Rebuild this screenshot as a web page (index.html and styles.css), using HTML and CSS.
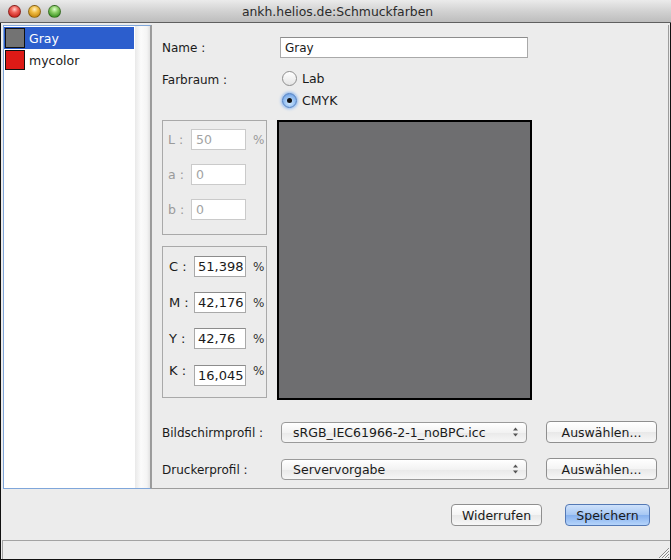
FILE: index.html
```html
<!DOCTYPE html>
<html>
<head>
<meta charset="utf-8">
<link rel="stylesheet" href="styles.css">
</head>
<body>
<div class="window">
  <div class="titlebar">
    <div class="lights">
      <span class="light red"></span>
      <span class="light yellow"></span>
      <span class="light green"></span>
    </div>
    <div class="title">ankh.helios.de:Schmuckfarben</div>
  </div>
  <div class="frame">
    <div class="main">
      <div class="list">
        <div class="items">
          <div class="item selected"><span class="swatch gray"></span><span>Gray</span></div>
          <div class="item"><span class="swatch red-sw"></span><span>mycolor</span></div>
        </div>
        <div class="scrolltrack"></div>
      </div>
      <div class="panel">
        <div class="row name-row">
          <span class="label">Name :</span>
          <div class="field name-field">Gray</div>
        </div>
        <div class="space-row">
          <span class="label space-label">Farbraum :</span>
          <div class="radios">
            <div class="radio-row"><span class="radio"></span><span>Lab</span></div>
            <div class="radio-row"><span class="radio on"></span><span>CMYK</span></div>
          </div>
        </div>
        <div class="middle">
          <div class="boxes">
            <div class="box lab-box">
              <div class="vrow"><span class="vlabel">L :</span><div class="field vfield dis">50</div><span class="pct">%</span></div>
              <div class="vrow"><span class="vlabel">a :</span><div class="field vfield dis">0</div></div>
              <div class="vrow"><span class="vlabel">b :</span><div class="field vfield dis">0</div></div>
            </div>
            <div class="box cmyk-box">
              <div class="vrow"><span class="clabel">C :</span><div class="field cfield">51,398</div><span class="pct dark">%</span></div>
              <div class="vrow"><span class="clabel">M :</span><div class="field cfield">42,176</div><span class="pct dark">%</span></div>
              <div class="vrow"><span class="clabel">Y :</span><div class="field cfield">42,76</div><span class="pct dark">%</span></div>
              <div class="vrow krow"><span class="clabel up">K :</span><div class="field cfield">16,045</div><span class="pct dark up">%</span></div>
            </div>
          </div>
          <div class="preview"></div>
        </div>
        <div class="row profile-row first">
          <span class="label plabel">Bildschirmprofil :</span>
          <div class="select"><span>sRGB_IEC61966-2-1_noBPC.icc</span>
            <svg class="arrows" width="7" height="10" viewBox="0 0 7 10"><path d="M3.5 0.5 L6 3.5 L1 3.5 Z M3.5 9.5 L6 6.5 L1 6.5 Z" fill="#555"/></svg>
          </div>
          <div class="button choose">Auswählen...</div>
        </div>
        <div class="row profile-row">
          <span class="label plabel">Druckerprofil :</span>
          <div class="select"><span>Servervorgabe</span>
            <svg class="arrows" width="7" height="10" viewBox="0 0 7 10"><path d="M3.5 0.5 L6 3.5 L1 3.5 Z M3.5 9.5 L6 6.5 L1 6.5 Z" fill="#555"/></svg>
          </div>
          <div class="button choose">Auswählen...</div>
        </div>
      </div>
    </div>
    <div class="actions">
      <div class="button undo">Widerrufen</div>
      <div class="button save">Speichern</div>
    </div>
    <div class="status">
      <svg class="grip" width="13" height="13" viewBox="0 0 13 13">
        <path d="M12 2 L2 12 M12 5 L5 12 M12 8 L8 12 M12 11 L11 12" stroke="#8a8a8a" stroke-width="1"/>
        <path d="M12.7 2.7 L2.7 12.7 M12.7 5.7 L5.7 12.7 M12.7 8.7 L8.7 12.7" stroke="#ffffff" stroke-width="0.8"/>
      </svg>
    </div>
  </div>
</div>
</body>
</html>
```
FILE: styles.css
```css
* { box-sizing: border-box; }
html, body { margin: 0; padding: 0; }
body {
  width: 671px;
  height: 560px;
  overflow: hidden;
  font-family: "DejaVu Sans", "Noto Sans", sans-serif;
  font-size: 12px;
  color: #1a1a1a;
  background: #ececec;
}
.window { width: 671px; height: 560px; display: flex; flex-direction: column; }

.titlebar {
  height: 23px;
  flex: none;
  position: relative;
  display: flex;
  align-items: center;
  justify-content: center;
  background: linear-gradient(#ebebeb, #d2d2d2 50%, #bdbdbd);
  border-bottom: 1px solid #5f5f5f;
}
.lights { position: absolute; left: 8px; top: 5px; display: flex; gap: 7px; }
.light {
  width: 13px; height: 13px; border-radius: 50%;
  border: 1px solid rgba(0,0,0,0.35);
}
.light.red { background: radial-gradient(circle at 50% 30%, #ffd0cc 0, #f0645c 35%, #c8221c 80%); }
.light.yellow { background: radial-gradient(circle at 50% 30%, #fff0c8 0, #f2c048 35%, #c98a10 80%); }
.light.green { background: radial-gradient(circle at 50% 30%, #e0ffd0 0, #8ed06a 35%, #3c9424 80%); }
.title { font-size: 12.4px; color: #2b2b2b; padding-left: 4px; }

.frame {
  flex: 1;
  display: flex;
  flex-direction: column;
  border-left: 1px solid #111;
  border-right: 1px solid #111;
  border-bottom: 1px solid #111;
}
.main { margin-top: 2px; height: 464px; display: flex; }

.list {
  margin-left: 2px;
  width: 148px;
  display: flex;
  background: #fff;
  border: 1px solid #7fa6da;
  border-right-color: #9a9a9a;
}
.items { flex: 1; padding: 1px 0 0 0; }
.item { height: 22px; display: flex; align-items: center; gap: 4px; padding-left: 1px; font-size: 12.5px; }
.item.selected { background: #2c5ecd; color: #fff; margin-right: 1px; }
.swatch { width: 20px; height: 20px; border: 1px solid #111; flex: none; }
.swatch.gray { background: #737373; }
.swatch.red-sw { background: #dd1a16; }
.scrolltrack { width: 15px; background: linear-gradient(90deg, #e9e9e9, #fbfbfb 40%, #f4f4f4 80%, #e2e2e2); }

.panel {
  flex: 1;
  margin-right: 1px;
  border-left: 1px solid #9c9c9c;
  border-right: 1px solid #9c9c9c;
  border-bottom: 1px solid #9c9c9c;
  padding: 12px 0 0 10px;
}
.row { display: flex; align-items: center; }
.label { width: 118px; flex: none; }
.field {
  height: 21px;
  background: #fff;
  border: 1px solid #a9a9a9;
  border-top-color: #8c8c8c;
  display: flex;
  align-items: center;
  padding-left: 4px;
}
.name-field { width: 248px; }

.space-row { display: flex; margin-top: 9px; }
.space-label { padding-top: 6px; }
.radios { display: flex; flex-direction: column; }
.radio-row { height: 22px; display: flex; align-items: center; gap: 5px; padding-left: 2px; font-size: 12.5px; }
.radio-row + .radio-row { height: 23px; }
.radio {
  width: 15px; height: 15px; border-radius: 50%;
  border: 1px solid #8e8e8e;
  background: linear-gradient(#ffffff, #e4e4e4);
  position: relative;
}
.radio.on {
  border-color: #4f7fc4;
  background: radial-gradient(circle at 50% 65%, #d8ecff 0, #9cc4f2 45%, #5d92dc 100%);
  box-shadow: 0 0 3px 1px #8db8f0;
}
.radio.on::after {
  content: "";
  position: absolute;
  left: 4px; top: 4px;
  width: 5px; height: 5px; border-radius: 50%;
  background: #111;
}

.middle { display: flex; gap: 10px; margin-top: 8px; }
.boxes { width: 105px; display: flex; flex-direction: column; gap: 11px; }
.box { border: 1px solid #a9a9a9; }
.lab-box { height: 115px; padding: 8px 0 0 5px; display: flex; flex-direction: column; gap: 14px; }
.cmyk-box { height: 152px; padding: 9px 0 0 6px; display: flex; flex-direction: column; gap: 15px; }
.vrow { display: flex; align-items: center; height: 21px; }
.vlabel { width: 23px; color: #9a9a9a; font-size: 12.5px; }
.vfield { width: 55px; color: #a3a3a3; border-color: #cacaca; font-size: 12.5px; }
.vfield.dis { background: #fff; }
.pct { margin-left: 7px; color: #9a9a9a; font-size: 12px; }
.pct.dark { color: #333; }
.clabel { width: 25px; font-size: 13px; }
.cfield { width: 52px; font-size: 13px; padding-left: 3px; }
.krow { margin-top: 0; }
.krow .cfield { margin-top: 2px; }
.up { position: relative; top: -4px; }

.preview { width: 255px; height: 280px; border: 2px solid #000; background: #6e6e70; }

.profile-row.first { margin-top: 21px; }
.profile-row + .profile-row { margin-top: 15px; }
.plabel { width: 119px; padding-top: 1px; }
.select {
  width: 246px; height: 21px;
  border: 1px solid #9a9a9a;
  border-radius: 4px;
  background: linear-gradient(#ffffff, #f2f2f2 50%, #e9e9e9 51%, #f6f6f6);
  display: flex; align-items: center; justify-content: space-between;
  padding: 0 7px 0 11px;
  font-size: 12.5px;
}
.button {
  height: 22px;
  border: 1px solid #8f8f8f;
  border-radius: 4px;
  background: linear-gradient(#ffffff, #f4f4f4 50%, #e8e8e8 51%, #f7f7f7);
  display: flex; align-items: center; justify-content: center;
  font-size: 12.5px;
}
.choose { width: 111px; margin-left: 19px; }

.actions { height: 51px; display: flex; justify-content: flex-end; gap: 23px; padding: 15px 20px 0 0; }
.undo { width: 91px; }
.save {
  width: 85px;
  border-color: #5479b5;
  background: linear-gradient(#cfe2fb, #a6c7f3 50%, #86b1ee 51%, #b5d4fb);
}

.status {
  height: 19px;
  margin-left: 1px;
  border-top: 1px solid #a3a3a3;
  border-left: 1px solid #a3a3a3;
  position: relative;
}
.grip { position: absolute; right: 0; bottom: 0; }
```
